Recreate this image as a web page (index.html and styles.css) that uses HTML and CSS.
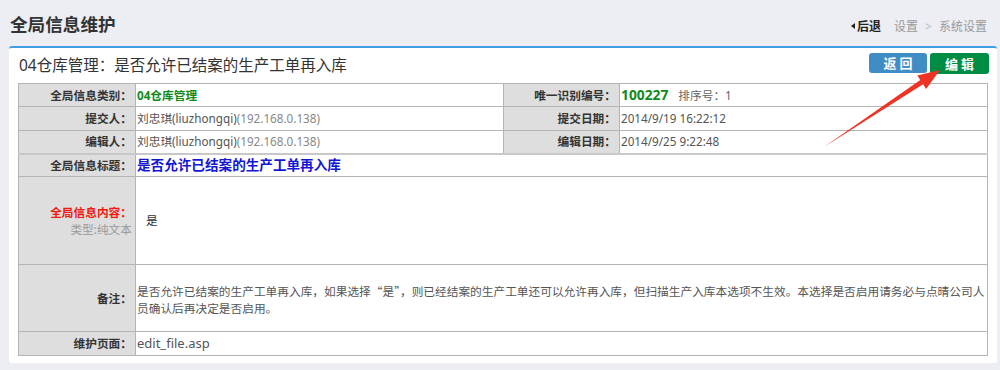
FILE: index.html
```html
<!DOCTYPE html>
<html lang="zh-CN">
  <head>
    <meta charset="UTF-8" />
    <meta name="viewport" content="width=device-width, initial-scale=1.0" />
    <title>全局信息维护</title>
    <link rel="stylesheet" href="styles.css">
  </head>
  <body>
    <div class="page-header">
      <h1>全局信息维护</h1>
      <div class="crumbs">
        <a class="back" href="#"><span class="tri"></span>后退</a>
        <span>设置</span>
        <span class="sep">&gt;</span>
        <span>系统设置</span>
      </div>
    </div>

    <div class="panel">
      <div class="panel-head">
        <h2>04仓库管理：是否允许已结案的生产工单再入库</h2>
        <div class="actions">
          <button class="btn btn-blue">返回</button>
          <button class="btn btn-green">编辑</button>
        </div>
      </div>

      <table class="info">
        <colgroup>
          <col class="c-label" />
          <col class="c-value" />
          <col class="c-label2" />
          <col />
        </colgroup>
        <tr class="r1">
          <th>全局信息类别：</th>
          <td><b class="green">04仓库管理</b></td>
          <th>唯一识别编号：</th>
          <td><b class="green big">100227</b><span class="sort">排序号：1</span></td>
        </tr>
        <tr class="r2">
          <th>提交人：</th>
          <td>刘忠琪(liuzhongqi)<span class="ip">(192.168.0.138)</span></td>
          <th>提交日期：</th>
          <td>2014/9/19 16:22:12</td>
        </tr>
        <tr class="r3">
          <th>编辑人：</th>
          <td>刘忠琪(liuzhongqi)<span class="ip">(192.168.0.138)</span></td>
          <th>编辑日期：</th>
          <td>2014/9/25 9:22:48</td>
        </tr>
        <tr class="r4">
          <th>全局信息标题：</th>
          <td colspan="3"><b class="blue">是否允许已结案的生产工单再入库</b></td>
        </tr>
        <tr class="r5">
          <th><span class="red">全局信息内容：</span><br /><span class="type">类型:纯文本</span></th>
          <td colspan="3" class="content">是</td>
        </tr>
        <tr class="r6">
          <th>备注：</th>
          <td colspan="3" class="remark">是否允许已结案的生产工单再入库，如果选择“是”，则已经结案的生产工单还可以允许再入库，但扫描生产入库本选项不生效。本选择是否启用请务必与点晴公司人员确认后再决定是否启用。</td>
        </tr>
        <tr class="r7">
          <th>维护页面：</th>
          <td colspan="3">edit_file.asp</td>
        </tr>
      </table>
    </div>

    <svg class="arrow" width="1000" height="370" viewBox="0 0 1000 370">
      <polygon points="824,147 920.3,80.1 917.3,75.5 940,70 926.1,88.9 923.1,84.3" fill="#ee3224" />
    </svg>
  </body>
</html>
```

FILE: styles.css
```css
body {
  font-family: "Noto Sans", "Noto Sans CJK SC", sans-serif;
  background-color: #eceef3;
  margin: 0;
  color: #333;
}
.page-header {
  display: flex;
  justify-content: space-between;
  align-items: center;
  height: 46px;
  padding: 0 13px 0 10px;
}
h1 {
  margin: 0;
  font-size: 17.6px;
  font-weight: bold;
  color: #333;
  line-height: 24px;
  margin-top: 1px;
}
.crumbs {
  display: flex;
  align-items: center;
  gap: 7px;
  font-size: 12px;
  color: #999;
  margin-top: 6px;
}
.crumbs .back {
  color: #222;
  font-weight: bold;
  text-decoration: none;
  display: flex;
  align-items: center;
  margin-right: 6px;
}
.crumbs .tri {
  display: inline-block;
  width: 0;
  height: 0;
  border-top: 3px solid transparent;
  border-bottom: 3px solid transparent;
  border-right: 4px solid #222;
  margin-right: 2px;
}
.crumbs .sep {
  color: #bbb;
}
.panel {
  margin: 0 3px 0 9px;
  background-color: white;
  border-top: 2px solid #3d9ee6;
  border-radius: 3px;
  padding: 5px 8px 7px 9px;
}
.panel-head {
  display: flex;
  justify-content: space-between;
  align-items: flex-start;
  height: 26px;
  margin-bottom: 4px;
}
h2 {
  margin: 0;
  font-size: 15.5px;
  font-weight: normal;
  line-height: 25px;
  color: #333;
  padding-left: 1px;
}
.actions {
  display: flex;
  gap: 3px;
}
.btn {
  font-family: inherit;
  font-size: 13px;
  font-weight: bold;
  color: white;
  border: none;
  border-radius: 3px;
  height: 20px;
  width: 58px;
  padding: 0;
  letter-spacing: 3px;
  text-indent: 3px;
  line-height: 20px;
  cursor: pointer;
}
.btn-blue {
  background-color: #3f8dc4;
}
.btn-green {
  background-color: #008c44;
  width: 59px;
  height: 21px;
}
.info {
  width: 970px;
  border-collapse: collapse;
  font-size: 11.7px;
  table-layout: fixed;
}
.info .c-label {
  width: 117px;
}
.info .c-value {
  width: 368px;
}
.info .c-label2 {
  width: 116px;
}
.info th,
.info td {
  border: 1px solid #b4b4b4;
  padding: 0 2px 0 1px;
  line-height: 17px;
}
.info th {
  background-color: #dedede;
  text-align: right;
  font-weight: bold;
  color: #333;
  padding-right: 3px;
}
.info td {
  color: #555;
  text-align: left;
}
.r1 { height: 23px; }
.r2 { height: 24px; }
.r3 { height: 23px; }
.r4 { height: 23px; }
.r5 { height: 88px; }
.r6 { height: 67px; }
.r7 { height: 24px; }
.r3 td,
.r3 th {
  border-bottom: 2px solid #c8c8c8;
}
.green {
  color: #118a1a;
}
.big {
  font-size: 13.8px;
}
.sort {
  color: #666;
  margin-left: 10px;
}
.ip {
  color: #888;
}
.blue {
  color: #1515d6;
  font-size: 13.6px;
}
.red {
  color: #f0190f;
}
.type {
  color: #999;
  font-weight: normal;
}
.info .content {
  padding-left: 10px;
  color: #333;
}
.info .remark {
  font-family: "Noto Sans CJK SC", sans-serif;
  font-feature-settings: "fwid";
  padding-top: 2px;
  padding-right: 0;
}
.info .r7 td {
  font-size: 13px;
}
.arrow {
  position: absolute;
  left: 0;
  top: 0;
  pointer-events: none;
}
```
